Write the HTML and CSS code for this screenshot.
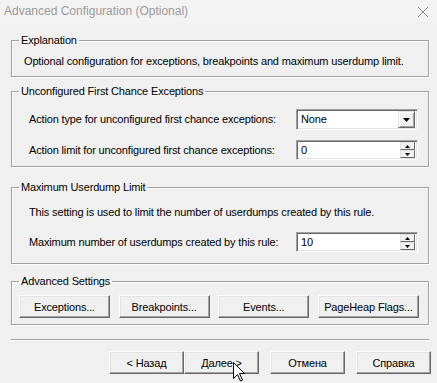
FILE: index.html
```html
<!DOCTYPE html>
<html lang="en">
<head>
    <meta charset="UTF-8">
    <title>Advanced Configuration (Optional)</title>
    <link rel="stylesheet" href="styles.css">
</head>
<body>
<div class="window">
    <div class="titlebar">
        <span class="title">Advanced Configuration (Optional)</span>
        <svg class="close" width="12" height="12" viewBox="0 0 12 12">
            <path d="M1 1 L11 11 M11 1 L1 11" stroke="#8a8a8a" stroke-width="1" fill="none"/>
        </svg>
    </div>

    <div class="content">
        <fieldset class="group group-explain">
            <legend>Explanation</legend>
            <p class="note">Optional configuration for exceptions, breakpoints and maximum userdump limit.</p>
        </fieldset>

        <fieldset class="group group-first">
            <legend>Unconfigured First Chance Exceptions</legend>
            <div class="row row-combo">
                <label>Action type for unconfigured first chance exceptions:</label>
                <div class="field combo">
                    <span class="value">None</span>
                    <span class="drop">
                        <svg width="7" height="4" viewBox="0 0 7 4"><path d="M0 0 H7 L3.5 4 Z" fill="#000"/></svg>
                    </span>
                </div>
            </div>
            <div class="row row-spin">
                <label>Action limit for unconfigured first chance exceptions:</label>
                <div class="field spin">
                    <span class="value">0</span>
                    <span class="spin-buttons">
                        <span class="spin-btn"><svg width="5" height="3" viewBox="0 0 5 3"><path d="M2.5 0 L5 3 H0 Z" fill="#000"/></svg></span>
                        <span class="spin-btn"><svg width="5" height="3" viewBox="0 0 5 3"><path d="M0 0 H5 L2.5 3 Z" fill="#000"/></svg></span>
                    </span>
                </div>
            </div>
        </fieldset>

        <fieldset class="group group-dump">
            <legend>Maximum Userdump Limit</legend>
            <p class="note">This setting is used to limit the number of userdumps created by this rule.</p>
            <div class="row row-spin">
                <label>Maximum number of userdumps created by this rule:</label>
                <div class="field spin">
                    <span class="value">10</span>
                    <span class="spin-buttons">
                        <span class="spin-btn"><svg width="5" height="3" viewBox="0 0 5 3"><path d="M2.5 0 L5 3 H0 Z" fill="#000"/></svg></span>
                        <span class="spin-btn"><svg width="5" height="3" viewBox="0 0 5 3"><path d="M0 0 H5 L2.5 3 Z" fill="#000"/></svg></span>
                    </span>
                </div>
            </div>
        </fieldset>

        <fieldset class="group group-advanced">
            <legend>Advanced Settings</legend>
            <div class="button-row">
                <button class="btn">Exceptions...</button>
                <button class="btn">Breakpoints...</button>
                <button class="btn">Events...</button>
                <button class="btn btn-wide">PageHeap Flags...</button>
            </div>
        </fieldset>
    </div>

    <div class="separator"></div>

    <div class="footer">
        <button class="btn btn-nav">&lt; Назад</button>
        <button class="btn btn-nav">Далее &gt;</button>
        <button class="btn btn-nav btn-gap">Отмена</button>
        <button class="btn btn-nav btn-gap">Справка</button>
    </div>

    <svg class="cursor" width="13" height="20" viewBox="0 0 13 20">
        <path d="M0.5 0.5 L0.5 16.5 L4.5 12.5 L7.5 19 L9.5 18 L6.5 11.5 L11.5 11.5 Z" fill="#fff" stroke="#000" stroke-width="1" stroke-linejoin="miter"/>
    </svg>
</div>
</body>
</html>
```

FILE: styles.css
```css
body {
    margin: 0;
    padding: 0;
    background: #f0f0f0;
}

.window {
    position: relative;
    width: 437px;
    height: 383px;
    overflow: hidden;
    background: #f0f0f0;
    font-family: "Liberation Sans", Arial, sans-serif;
    font-size: 11px;
    line-height: 13px;
    letter-spacing: -0.15px;
    color: #000;
}

.titlebar {
    height: 23px;
    display: flex;
    align-items: center;
    justify-content: space-between;
    padding: 0 8px 0 4px;
    background: #f3f3f3;
    letter-spacing: 0;
}

.title {
    font-size: 12px;
    color: #9a9a9a;
}

.content {
    padding-left: 11px;
}

.group {
    width: 418px;
    box-sizing: border-box;
    margin: 0;
    padding: 0 10px 0 17px;
    border: 1px solid #a0a0a0;
    box-shadow: 1px 1px 0 #fff, inset 1px 1px 0 #fff;
}

.group legend {
    padding: 0 2px;
    margin-left: -10px;
    line-height: 13px;
}

.note {
    margin: 0;
}

.group-explain {
    margin-top: 11px;
    padding-top: 8px;
    padding-bottom: 8px;
    padding-left: 12px;
}

.group-explain legend {
    margin-left: -5px;
}

.group-first {
    margin-top: 8px;
    padding-top: 11px;
    padding-bottom: 6px;
}

.group-first .row-spin {
    margin-top: 10px;
}

.group-dump {
    margin-top: 14px;
    padding-top: 12px;
    padding-bottom: 11px;
}

.group-dump .row-spin {
    margin-top: 13px;
}

.group-advanced {
    margin-top: 11px;
    padding: 7px 9px 6px 7px;
}

.group-advanced legend {
    margin-left: 0;
}

.row {
    display: flex;
    align-items: center;
    justify-content: space-between;
}

.field {
    width: 122px;
    box-sizing: border-box;
    display: flex;
    align-items: center;
    justify-content: space-between;
    background: #fff;
    border: 1px solid;
    border-color: #a0a0a0 #fff #fff #a0a0a0;
    box-shadow: inset 1px 1px 0 #696969, inset -1px -1px 0 #e3e3e3;
}

.combo {
    height: 21px;
    padding: 2px 2px 2px 3px;
}

.spin {
    height: 20px;
    padding: 2px 2px 2px 3px;
}

.value {
    padding-left: 1px;
}

.drop {
    width: 17px;
    height: 17px;
    box-sizing: border-box;
    display: flex;
    align-items: center;
    justify-content: center;
    background: #f0f0f0;
    border: 1px solid;
    border-color: #e3e3e3 #696969 #696969 #e3e3e3;
    box-shadow: inset 1px 1px 0 #fff, inset -1px -1px 0 #a0a0a0;
}

.spin-buttons {
    display: flex;
    flex-direction: column;
    width: 15px;
    height: 16px;
}

.spin-btn {
    flex: 1;
    display: flex;
    align-items: center;
    justify-content: center;
    background: #f0f0f0;
    border: 1px solid;
    border-color: #e3e3e3 #696969 #696969 #e3e3e3;
}

.button-row {
    display: flex;
    justify-content: space-between;
}

.btn {
    height: 23px;
    width: 91px;
    padding: 0;
    font-family: "Liberation Sans", Arial, sans-serif;
    font-size: 11px;
    letter-spacing: -0.15px;
    color: #000;
    background: #f0f0f0;
    border: 1px solid;
    border-color: #fff #696969 #696969 #fff;
    box-shadow: inset -1px -1px 0 #a0a0a0, inset 1px 1px 0 #e3e3e3;
}

.btn-wide {
    width: 101px;
}

.separator {
    margin: 14px 8px 0 11px;
    border-top: 1px solid #a0a0a0;
    border-bottom: 1px solid #fff;
    height: 0;
}

.footer {
    display: flex;
    justify-content: flex-end;
    padding-right: 6px;
    margin-top: 10px;
}

.btn-nav {
    width: 75px;
}

.btn-gap {
    margin-left: 11px;
}

.cursor {
    position: absolute;
    left: 233px;
    top: 362px;
}
```
